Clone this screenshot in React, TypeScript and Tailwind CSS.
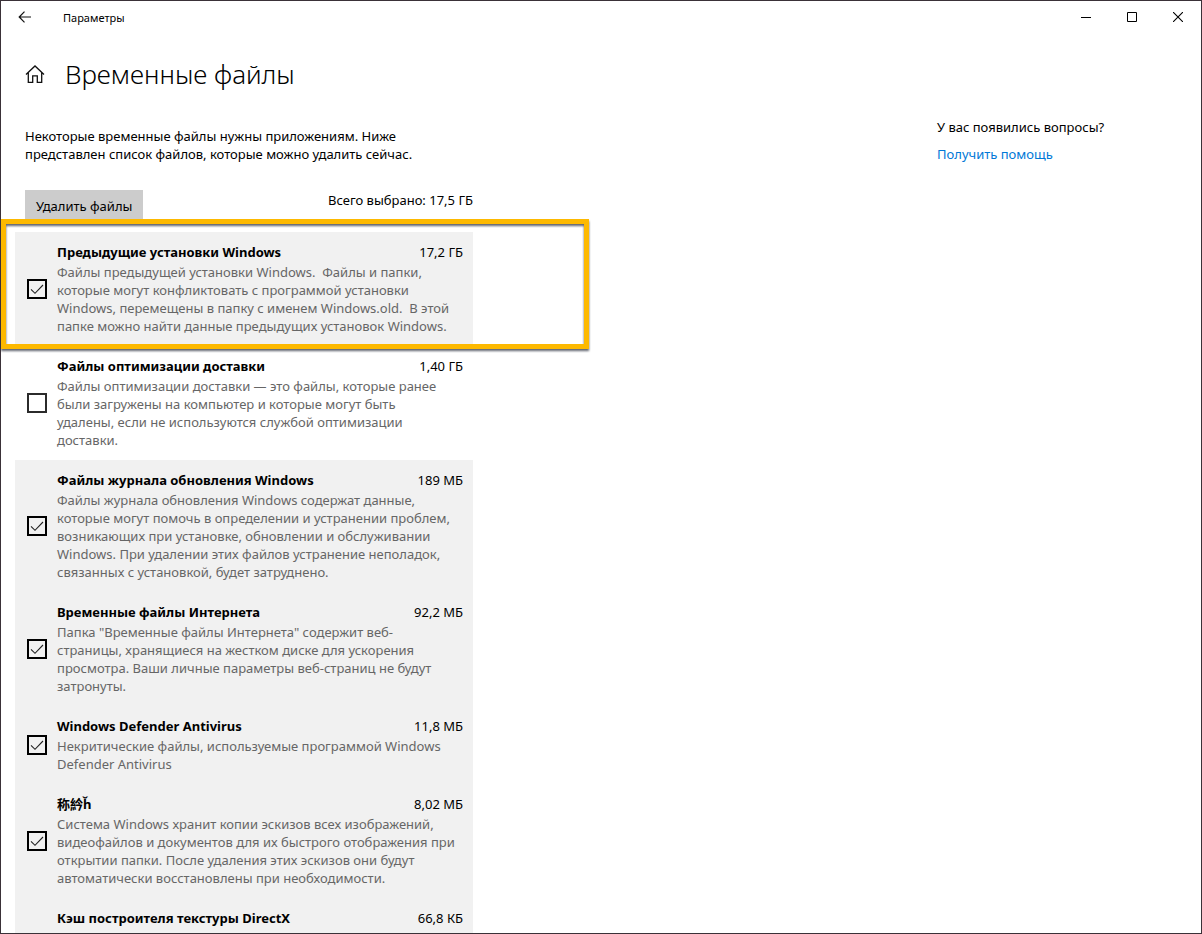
const items = [
  {
    id: "windows-old",
    title: "Предыдущие установки Windows",
    size: "17,2 ГБ",
    checked: true,
    highlighted: true,
    description:
      "Файлы предыдущей установки Windows.  Файлы и папки,\nкоторые могут конфликтовать с программой установки\nWindows, перемещены в папку с именем Windows.old.  В этой\nпапке можно найти данные предыдущих установок Windows.",
  },
  {
    id: "delivery",
    title: "Файлы оптимизации доставки",
    size: "1,40 ГБ",
    checked: false,
    description:
      "Файлы оптимизации доставки — это файлы, которые ранее\nбыли загружены на компьютер и которые могут быть\nудалены, если не используются службой оптимизации\nдоставки.",
  },
  {
    id: "update-log",
    title: "Файлы журнала обновления Windows",
    size: "189 МБ",
    checked: true,
    description:
      "Файлы журнала обновления Windows содержат данные,\nкоторые могут помочь в определении и устранении проблем,\nвозникающих при установке, обновлении и обслуживании\nWindows. При удалении этих файлов устранение неполадок,\nсвязанных с установкой, будет затруднено.",
  },
  {
    id: "internet",
    title: "Временные файлы Интернета",
    size: "92,2 МБ",
    checked: true,
    description:
      'Папка "Временные файлы Интернета" содержит веб-\nстраницы, хранящиеся на жестком диске для ускорения\nпросмотра. Ваши личные параметры веб-страниц не будут\nзатронуты.',
  },
  {
    id: "defender",
    title: "Windows Defender Antivirus",
    size: "11,8 МБ",
    checked: true,
    description: "Некритические файлы, используемые программой Windows\nDefender Antivirus",
  },
  {
    id: "thumbnails",
    title: "称紟ȟ",
    size: "8,02 МБ",
    checked: true,
    description:
      "Система Windows хранит копии эскизов всех изображений,\nвидеофайлов и документов для их быстрого отображения при\nоткрытии папки. После удаления этих эскизов они будут\nавтоматически восстановлены при необходимости.",
  },
  {
    id: "directx",
    title: "Кэш построителя текстуры DirectX",
    size: "66,8 КБ",
    checked: true,
  },
]

function TitleBar() {
  return (
    <header className="flex h-8 shrink-0 items-center justify-between">
      <div className="flex items-center">
        <button type="button" aria-label="Назад" className="flex h-8 w-12 items-center justify-center">
          <svg width="14" height="12" viewBox="0 0 14 12" fill="none" stroke="#111" strokeWidth="1.2">
            <path d="M6.5 0.7 1.2 6l5.3 5.3M1.2 6H13" />
          </svg>
        </button>
        <span className="ml-3.5 pt-0.5 text-[11px]">Параметры</span>
      </div>
      <div className="flex">
        <button type="button" aria-label="Свернуть" className="flex h-8 w-[46px] items-center justify-center">
          <svg width="10" height="10" viewBox="0 0 10 10" shapeRendering="crispEdges">
            <path d="M0 5h10v1H0z" />
          </svg>
        </button>
        <button type="button" aria-label="Развернуть" className="flex h-8 w-[46px] items-center justify-center">
          <svg width="10" height="10" viewBox="0 0 10 10" fill="none" stroke="#000">
            <path d="M0.5 0.5h9v9h-9z" />
          </svg>
        </button>
        <button type="button" aria-label="Закрыть" className="flex h-8 w-[46px] items-center justify-center">
          <svg width="10" height="10" viewBox="0 0 10 10" fill="none" stroke="#000" strokeWidth="1.1">
            <path d="M0 0l10 10M10 0L0 10" />
          </svg>
        </button>
      </div>
    </header>
  )
}

function FileItem({ item }: { item: (typeof items)[number] }) {
  return (
    <li
      className={`relative flex items-center gap-2.5 pt-2.5 pr-2.5 pb-[11px] pl-3 ${item.checked ? "bg-[#f1f1f1]" : ""}`}
    >
      <span className="grid shrink-0">
        <input
          id={item.id}
          type="checkbox"
          defaultChecked={item.checked}
          className="peer col-start-1 row-start-1 size-5 appearance-none border-2 border-[#2b2b2b] checked:border-black"
        />
        <svg
          viewBox="0 0 20 20"
          fill="none"
          stroke="#222"
          strokeWidth="1.1"
          className="pointer-events-none invisible col-start-1 row-start-1 size-5 peer-checked:visible"
        >
          <path d="M4 10.3l4 4L16 6" />
        </svg>
      </span>
      <div className={`min-w-0 flex-1 ${item.description ? "" : "min-h-24"}`}>
        <div className="flex justify-between text-[13px] leading-5">
          <label htmlFor={item.id} className="font-bold">
            {item.title}
          </label>
          <span>{item.size}</span>
        </div>
        {item.description && (
          <p className="mt-px text-[13px] leading-[18px] whitespace-pre text-[#666]">{item.description}</p>
        )}
      </div>
      {/* Callout frame around the row */}
      {item.highlighted && (
        <div className="pointer-events-none absolute -top-[13px] -right-[116px] -bottom-[3px] -left-3.5 z-10 border-5 border-[#fdb900] drop-shadow-[0_2px_1px_rgba(40,45,60,0.75)]" />
      )}
    </li>
  )
}

export default function App() {
  return (
    <div className="flex h-screen flex-col overflow-hidden border border-[#3a3138] bg-white font-['Noto_Sans','Noto_Sans_CJK_JP',sans-serif] text-black">
      <TitleBar />
      <div className="mt-[21px] flex items-center px-6">
        <a href="#" aria-label="Главная">
          <svg width="20" height="20" viewBox="0 0 20 20" fill="none" stroke="#111" strokeWidth="1.3">
            <path d="M1 10.5 10 2l9 8.5M3.3 8.6V18.3h4.4v-6.5h4.6v6.5h4.4V8.6" />
          </svg>
        </a>
        <h1 className="ml-5 text-[26px] leading-10 font-light">Временные файлы</h1>
      </div>
      <div className="flex min-h-0 flex-1 items-start justify-between">
        <main className="ml-3.5 w-[458px] pt-[33px]">
          <p className="ml-2.5 text-[13px] leading-[18px] whitespace-pre-line">
            {"Некоторые временные файлы нужны приложениям. Ниже\nпредставлен список файлов, которые можно удалить сейчас."}
          </p>
          <div className="mt-[27px] ml-2.5 flex items-start justify-between text-[13px]">
            <button type="button" className="h-[34px] bg-[#ccc] px-[11px]">
              Удалить файлы
            </button>
            <span className="leading-5">Всего выбрано: 17,5 ГБ</span>
          </div>
          <ul className="mt-2">
            {items.map((item) => (
              <FileItem key={item.id} item={item} />
            ))}
          </ul>
        </main>
        <aside className="w-[264px] pt-6 text-[13px] leading-[18px]">
          <p>У вас появились вопросы?</p>
          <a href="#" className="mt-[9px] inline-block text-[#0078d7]">
            Получить помощь
          </a>
        </aside>
      </div>
    </div>
  )
}
